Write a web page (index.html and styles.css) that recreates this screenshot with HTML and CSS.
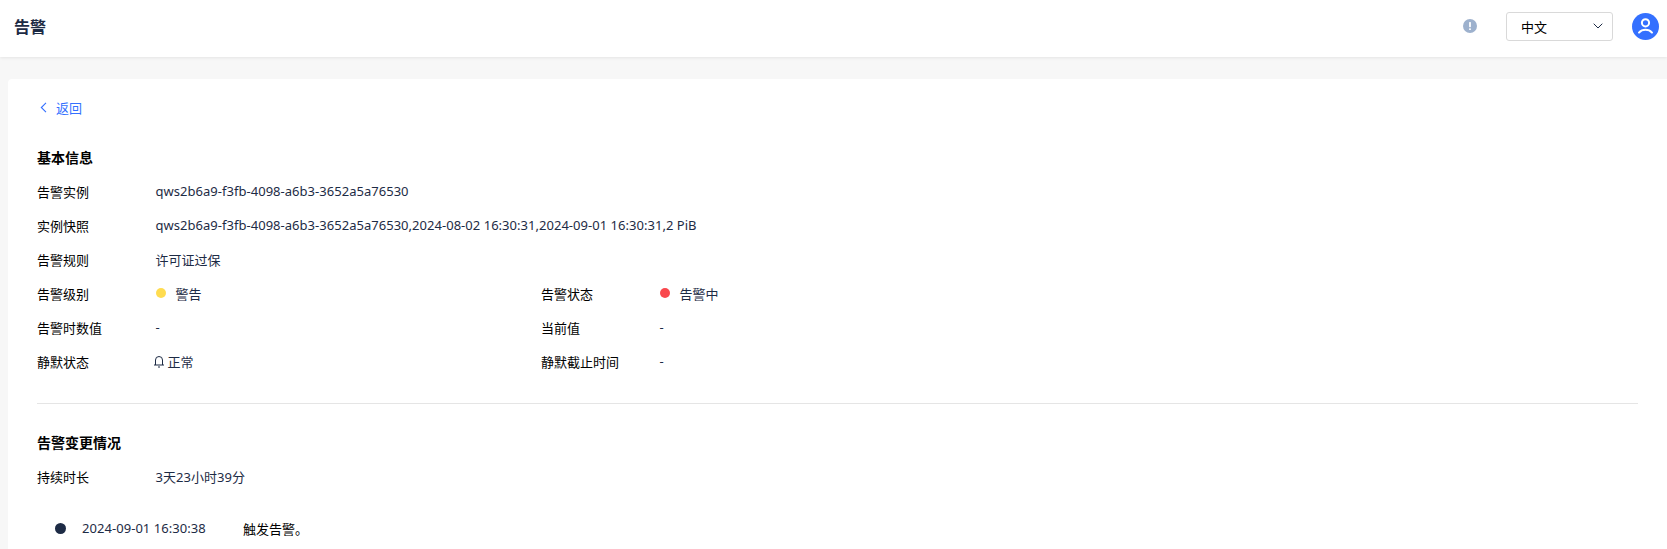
FILE: index.html
```html
<!DOCTYPE html>
<html lang="zh-CN">
<head>
<meta charset="utf-8">
<title>告警</title>
<link rel="stylesheet" href="styles.css">
</head>
<body>
<header class="topbar">
  <h1 class="page-title">告警</h1>
  <div class="top-actions">
    <svg class="info-icon" viewBox="0 0 14 14" width="14" height="14"><circle cx="7" cy="7" r="7" fill="#9db1cd"/><rect x="6.1" y="3" width="1.8" height="5.2" rx=".6" fill="#fff"/><rect x="6.1" y="9.3" width="1.8" height="1.8" rx=".6" fill="#fff"/></svg>
    <div class="lang-select">
      <span>中文</span>
      <svg viewBox="0 0 10 6" width="10" height="6"><path d="M.7.7 5 5l4.3-4.3" fill="none" stroke="#1d2b45" stroke-width="1"/></svg>
    </div>
    <svg class="avatar" viewBox="0 0 27 27" width="27" height="27"><circle cx="13.500" cy="13.500" r="13.500" fill="#3470ff"/><circle cx="13.500" cy="9.800" r="3.600" fill="none" stroke="#fff" stroke-width="2"/><path d="M7 19.600c1.800-2 4-2.800 6.500-2.800s4.700.8 6.500 2.800" fill="none" stroke="#fff" stroke-width="2" stroke-linecap="round"/></svg>
  </div>
</header>
<main class="card">
  <a class="back" href="#">
    <svg viewBox="0 0 7 11" width="7" height="11"><path d="M6 .8 1.300 5.500 6 10.200" fill="none" stroke="#3470ff" stroke-width="1.100"/></svg>
    <span>返回</span>
  </a>
  <h2 class="section-title first">基本信息</h2>
  <div class="row"><span class="label">告警实例</span><span class="value">qws2b6a9-f3fb-4098-a6b3-3652a5a76530</span></div>
  <div class="row"><span class="label">实例快照</span><span class="value">qws2b6a9-f3fb-4098-a6b3-3652a5a76530,2024-08-02 16:30:31,2024-09-01 16:30:31,2 PiB</span></div>
  <div class="row"><span class="label">告警规则</span><span class="value">许可证过保</span></div>
  <div class="row split">
    <div class="cell"><span class="label">告警级别</span><span class="value status"><i class="dot yellow"></i>警告</span></div>
    <div class="cell"><span class="label">告警状态</span><span class="value status"><i class="dot red"></i>告警中</span></div>
  </div>
  <div class="row split">
    <div class="cell"><span class="label">告警时数值</span><span class="value">-</span></div>
    <div class="cell"><span class="label">当前值</span><span class="value">-</span></div>
  </div>
  <div class="row split">
    <div class="cell"><span class="label">静默状态</span><span class="value bell"><svg viewBox="0 0 12 14" width="12" height="14"><path d="M1 11h10M2.500 11V6a3.500 3.500 0 0 1 7 0v5M5 13h2" fill="none" stroke="#1d2b45" stroke-width="1"/></svg>正常</span></div>
    <div class="cell"><span class="label">静默截止时间</span><span class="value">-</span></div>
  </div>
  <hr class="divider">
  <h2 class="section-title">告警变更情况</h2>
  <div class="row"><span class="label">持续时长</span><span class="value">3天23小时39分</span></div>
  <div class="timeline-item">
    <i class="dot navy"></i>
    <span class="time">2024-09-01 16:30:38</span>
    <span class="event">触发告警。</span>
  </div>
</main>
</body>
</html>
```
FILE: styles.css
```css
* { box-sizing: border-box; }
html, body { margin: 0; height: 100%; overflow: hidden; }
body {
  background: #f7f7f7;
  font-family: "Noto Sans", "Noto Sans CJK SC", sans-serif;
  font-size: 13px;
  color: #1d2b45;
}
.topbar {
  height: 57px;
  background: #fff;
  box-shadow: 0 1px 3px rgba(0, 0, 0, .08);
  display: flex;
  align-items: center;
  justify-content: space-between;
  padding: 0 8px 5px 14px;
}
.page-title { margin: 0; font-size: 16px; font-weight: 700; color: #1d2b45; }
.top-actions { display: flex; align-items: center; }
.info-icon { margin-right: 29px; }
.lang-select {
  width: 107px;
  height: 29px;
  border: 1px solid #d9d9d9;
  border-radius: 3px;
  display: flex;
  align-items: center;
  justify-content: space-between;
  padding: 0 9px 0 14px;
  color: #000;
}
.avatar { margin-left: 19px; }
.card {
  margin: 22px 0 0 8px;
  padding: 18px 29px;
  background: #fff;
  border-radius: 4px 0 0 0;
  height: 480px;
}
.back {
  display: flex;
  align-items: center;
  gap: 9px;
  height: 20px;
  padding-left: 3px;
  color: #3470ff;
  text-decoration: none;
}
.section-title { margin: 0 0 6px; height: 20px; line-height: 20px; font-size: 14px; font-weight: 700; color: #000; }
.section-title.first { margin-top: 31px; }
.row { display: flex; align-items: center; height: 34px; }
.split .cell { width: 504px; display: flex; align-items: center; }
.label { width: 118.5px; color: #000; flex: none; }
.value { letter-spacing: .03px; }
.status { display: flex; align-items: center; }
.bell { display: flex; align-items: center; gap: 3px; margin-left: -3px; }
.dot { display: block; border-radius: 50%; flex: none; }
.yellow, .red { width: 10px; height: 10px; margin-right: 10px; }
.yellow { background: #ffdc50; }
.red { background: #f9484d; }
.navy { width: 11px; height: 11px; background: #1d2b45; }
.divider { border: 0; border-top: 1px solid #e5e5e5; margin: 25px 0 29px; width: 1601px; }
.timeline-item { display: flex; align-items: center; height: 20px; margin-top: 25px; padding-left: 18px; color: #1d2b45; }
.time { margin-left: 16px; width: 161px; letter-spacing: .05px; }
.event { color: #000; }
```
